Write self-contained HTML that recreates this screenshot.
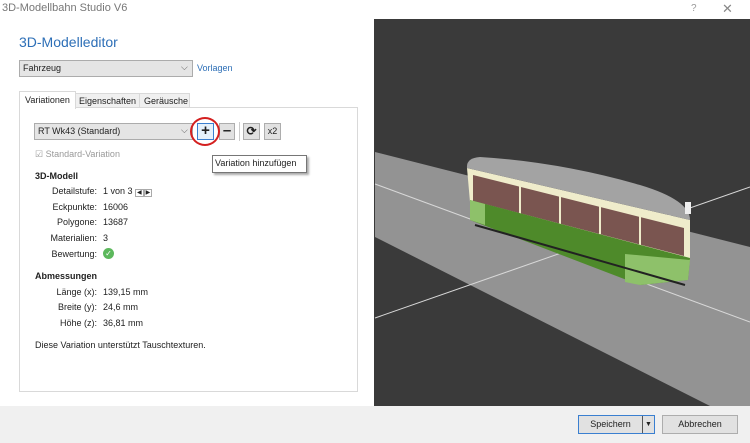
<!DOCTYPE html>
<html><head><meta charset="utf-8"><style>
body{margin:0;width:750px;height:443px;background:#fff;font-family:"Liberation Sans",sans-serif;font-size:9px;color:#222;position:relative;overflow:hidden}
.a{position:absolute;white-space:nowrap}
.combo{position:absolute;background:#e5e5e5;border:1px solid #acacac;box-sizing:border-box}
.btn{position:absolute;background:#e1e1e1;border:1px solid #adadad;box-sizing:border-box;text-align:center}
.lbl{position:absolute;width:97px;text-align:right;left:0}
.val{position:absolute;left:103px}
</style></head><body>
<div class="a" style="left:2px;top:2px;font-size:11px;color:#777">3D-Modellbahn Studio V6</div>
<div class="a" style="left:691px;top:3px;font-size:10px;color:#999">?</div>
<div class="a" style="left:722px;top:1px;font-size:13px;color:#888">✕</div>
<div class="a" style="left:19px;top:34px;font-size:14px;color:#2d6fb7">3D-Modelleditor</div>
<div class="combo" style="left:19px;top:60px;width:174px;height:17px"><span class="a" style="left:3px;top:2px">Fahrzeug</span><span class="a" style="left:161px;top:1px;font-size:9px;color:#555">⌵</span></div>
<div class="a" style="left:197px;top:63px;color:#2d6fb7">Vorlagen</div>
<div class="a" style="left:19px;top:91px;width:55px;height:17px;border:1px solid #d9d9d9;border-bottom:none;background:#fff;z-index:2"><span class="a" style="left:5px;top:3px">Variationen</span></div>
<div class="a" style="left:75px;top:93px;width:63px;height:14px;border:1px solid #d9d9d9;background:#f0f0f0"><span class="a" style="left:3px;top:2px">Eigenschaften</span></div>
<div class="a" style="left:139px;top:93px;width:49px;height:14px;border:1px solid #d9d9d9;background:#f0f0f0"><span class="a" style="left:4px;top:2px">Geräusche</span></div>
<div class="a" style="left:19px;top:107px;width:337px;height:283px;border:1px solid #d9d9d9;background:#fff"></div>
<div class="combo" style="left:34px;top:123px;width:159px;height:17px"><span class="a" style="left:3px;top:2px">RT Wk43 (Standard)</span><span class="a" style="left:146px;top:1px;font-size:9px;color:#555">⌵</span></div>
<div class="btn" style="left:197px;top:123px;width:17px;height:17px;border-color:#3a7fd0;background:#e5f1fb;font-size:15px;line-height:14px;font-weight:bold">+</div>
<div class="btn" style="left:219px;top:123px;width:16px;height:17px;font-size:15px;line-height:14px;font-weight:bold">–</div>
<div class="a" style="left:239px;top:122px;width:1px;height:19px;background:#ccc"></div>
<div class="btn" style="left:243px;top:123px;width:17px;height:17px;font-size:12px;line-height:15px;font-weight:bold">⟳</div>
<div class="btn" style="left:264px;top:123px;width:17px;height:17px;line-height:15px">x2</div>
<div class="a" style="left:190px;top:117px;width:26px;height:25px;border:2px solid #d42020;border-radius:50%"></div>
<div class="a" style="left:212px;top:155px;width:93px;height:16px;border:1px solid #767676;background:#fff;box-shadow:2px 2px 2px #aaa"><span class="a" style="left:2px;top:2px">Variation hinzufügen</span></div>
<div class="a" style="left:35px;top:149px;color:#999">☑ Standard-Variation</div>
<div class="a" style="left:35px;top:171px;font-weight:bold">3D-Modell</div>
<div class="a" style="left:0;top:186px;width:300px;height:200px">
<div class="lbl" style="top:0">Detailstufe:</div><div class="val" style="top:0">1 von 3 <span style="font-size:6px;border:1px solid #aaa;padding:0 1px">◀</span><span style="font-size:6px;border:1px solid #aaa;padding:0 1px">▶</span></div>
<div class="lbl" style="top:16px">Eckpunkte:</div><div class="val" style="top:16px">16006</div>
<div class="lbl" style="top:31px">Polygone:</div><div class="val" style="top:31px">13687</div>
<div class="lbl" style="top:47px">Materialien:</div><div class="val" style="top:47px">3</div>
<div class="lbl" style="top:63px">Bewertung:</div><div class="val" style="top:62px;width:11px;height:11px;border-radius:50%;background:#5cb85c;color:#fff;font-size:8px;text-align:center;line-height:11px">✓</div>
</div>
<div class="a" style="left:35px;top:271px;font-weight:bold">Abmessungen</div>
<div class="a" style="left:0;top:287px;width:300px;height:60px">
<div class="lbl" style="top:0">Länge (x):</div><div class="val" style="top:0">139,15 mm</div>
<div class="lbl" style="top:15px">Breite (y):</div><div class="val" style="top:15px">24,6 mm</div>
<div class="lbl" style="top:31px">Höhe (z):</div><div class="val" style="top:31px">36,81 mm</div>
</div>
<div class="a" style="left:35px;top:340px">Diese Variation unterstützt Tauschtexturen.</div>
<svg class="a" style="left:0;top:0" width="750" height="443">
<rect x="374" y="19" width="376" height="387" fill="#3a3a3a"/>
<polygon points="375,152 750,247 750,406 710,406 375,237" fill="#939393"/>
<line x1="375" y1="184" x2="750" y2="322" stroke="#d8d8d8" stroke-width="1"/>
<line x1="375" y1="318" x2="750" y2="187" stroke="#d8d8d8" stroke-width="1"/>
<rect x="0" y="406" width="750" height="37" fill="#f0f0f0"/>
<polygon points="467,168 690,220 690,260 470,202" fill="#efeccb"/>
<polygon points="473,175 684,228 684,256 473,201" fill="#7a5550"/>
<line x1="520" y1="185" x2="520" y2="214" stroke="#efeccb" stroke-width="2"/>
<line x1="560" y1="195" x2="560" y2="224" stroke="#efeccb" stroke-width="2"/>
<line x1="600" y1="205" x2="600" y2="234" stroke="#efeccb" stroke-width="2"/>
<line x1="640" y1="215" x2="640" y2="246" stroke="#efeccb" stroke-width="2"/>
<path d="M467,168 Q466,158 480,157 Q560,162 640,185 Q690,200 690,220 Z" fill="#a3a3a3"/>
<polygon points="470,200 690,258 688,280 640,285 470,220" fill="#4e8a2a"/>
<polygon points="470,200 485,204 485,225 470,220" fill="#8ec16a"/>
<polygon points="625,254 690,260 688,280 640,285 625,282" fill="#8ec16a"/>
<line x1="475" y1="225" x2="685" y2="285" stroke="#222" stroke-width="2"/>
<rect x="685" y="202" width="6" height="12" fill="#eee"/>
</svg>
<div class="btn" style="left:578px;top:415px;width:77px;height:19px;border-color:#3a7fd0;line-height:17px;padding-right:12px;font-size:9px">Speichern<span style="position:absolute;right:0;top:0;width:11px;height:17px;border-left:1px solid #555;font-size:7px">▼</span></div>
<div class="btn" style="left:662px;top:415px;width:76px;height:19px;line-height:17px">Abbrechen</div>
</body></html>
